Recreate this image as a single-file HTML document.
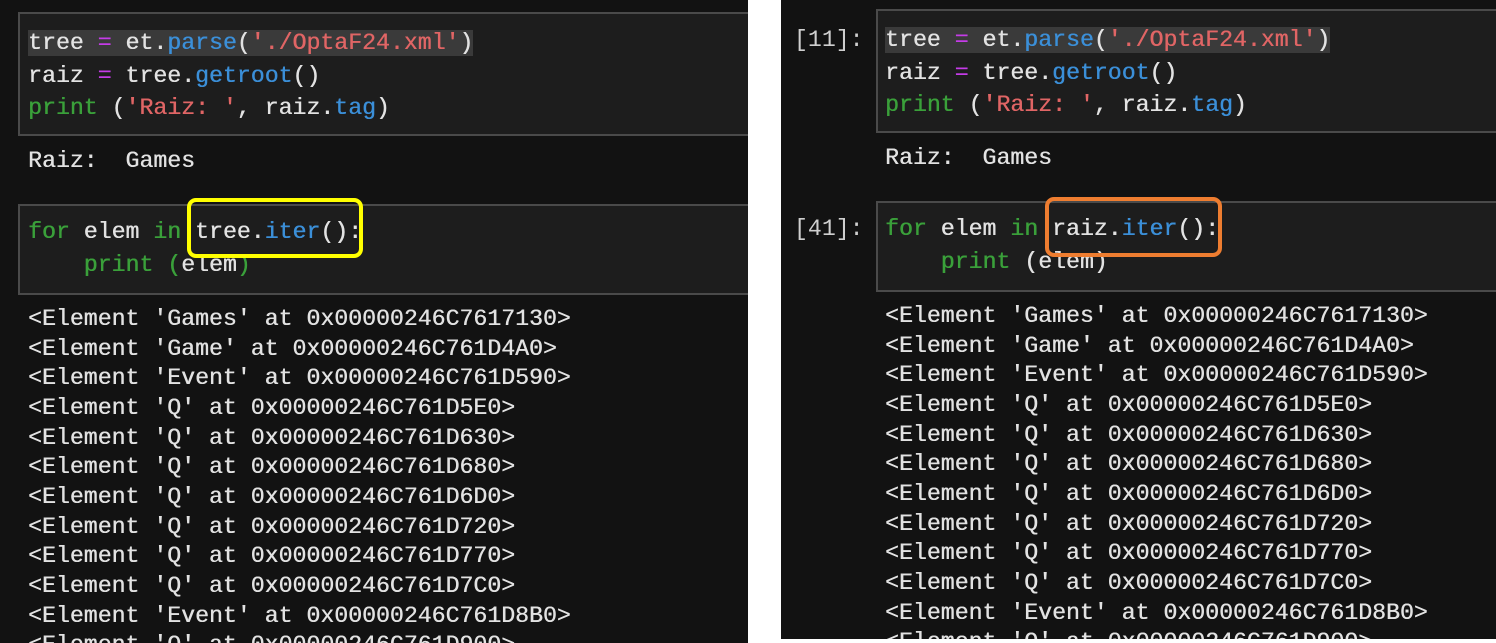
<!DOCTYPE html>
<html><head><meta charset="utf-8"><style>
body{margin:0;width:1496px;height:643px;background:#fff;overflow:hidden;position:relative;font-family:"Liberation Mono",monospace;font-size:23.2px;color:#e2e2e2}
.pan{position:absolute;background:#121212;overflow:hidden}
.box{position:absolute;background:#1d1d1d;border:2px solid #4a4a4a}
.t{position:absolute;white-space:pre;text-shadow:0.4px 0 0 currentColor}
.c{line-height:32.5px}
.o{line-height:29.65px}
.g{color:#3aa03a}.b{color:#3b8fd8}.r{color:#e06565}.p{color:#c53ce8}
.hl{background:#3a3a3a}
.pr{position:absolute;color:#cfcfcf;white-space:pre}
.ring{position:absolute;border-radius:9px;border:4px solid}
</style></head><body>
<div class="pan" style="left:0;top:0;width:748px;height:643px">
  <div class="box" style="left:18px;top:12px;width:760px;height:120px"></div>
  <div class="pr" style="left:-10px;top:27px;line-height:32.5px">:</div>
  <div class="t c" style="left:28px;top:27px"><span class="hl">tree <span class="p">=</span> et.<span class="b">parse</span>(<span class="r">'./OptaF24.xml'</span>)</span>
raiz <span class="p">=</span> tree.<span class="b">getroot</span>()
<span class="g">print</span> (<span class="r">'Raiz: '</span>, raiz.<span class="b">tag</span>)</div>
  <div class="t" style="left:28px;top:147px;line-height:29px">Raiz:  Games</div>
  <div class="box" style="left:18px;top:204px;width:760px;height:87px"></div>
  <div class="pr" style="left:-10px;top:216px;line-height:32.5px">:</div>
  <div class="t c" style="left:28px;top:216px"><span class="g">for</span> elem <span class="g">in</span> tree.<span class="b">iter</span>():
    <span class="g">print</span> <span class="g">(</span>elem<span class="g">)</span></div>
  <div class="ring" style="left:187px;top:198px;width:168px;height:52px;border-color:#ffff00"></div>
  <div class="t o" style="left:28px;top:305px">&lt;Element 'Games' at 0x00000246C7617130&gt;
&lt;Element 'Game' at 0x00000246C761D4A0&gt;
&lt;Element 'Event' at 0x00000246C761D590&gt;
&lt;Element 'Q' at 0x00000246C761D5E0&gt;
&lt;Element 'Q' at 0x00000246C761D630&gt;
&lt;Element 'Q' at 0x00000246C761D680&gt;
&lt;Element 'Q' at 0x00000246C761D6D0&gt;
&lt;Element 'Q' at 0x00000246C761D720&gt;
&lt;Element 'Q' at 0x00000246C761D770&gt;
&lt;Element 'Q' at 0x00000246C761D7C0&gt;
&lt;Element 'Event' at 0x00000246C761D8B0&gt;
&lt;Element 'Q' at 0x00000246C761D900&gt;</div>
</div>
<div class="pan" style="left:781px;top:0;width:715px;height:639px">
  <div class="box" style="left:95px;top:9px;width:700px;height:120px"></div>
  <div class="pr" style="left:13px;top:24px;line-height:32.5px">[11]:</div>
  <div class="t c" style="left:104px;top:24px"><span class="hl">tree <span class="p">=</span> et.<span class="b">parse</span>(<span class="r">'./OptaF24.xml'</span>)</span>
raiz <span class="p">=</span> tree.<span class="b">getroot</span>()
<span class="g">print</span> (<span class="r">'Raiz: '</span>, raiz.<span class="b">tag</span>)</div>
  <div class="t" style="left:104px;top:144px;line-height:29px">Raiz:  Games</div>
  <div class="box" style="left:95px;top:201px;width:700px;height:87px"></div>
  <div class="pr" style="left:13px;top:213px;line-height:32.5px">[41]:</div>
  <div class="t c" style="left:104px;top:213px"><span class="g">for</span> elem <span class="g">in</span> raiz.<span class="b">iter</span>():
    <span class="g">print</span> (elem)</div>
  <div class="ring" style="left:264px;top:197px;width:169px;height:52px;border-color:#ee7d30"></div>
  <div class="t o" style="left:104px;top:302px">&lt;Element 'Games' at 0x00000246C7617130&gt;
&lt;Element 'Game' at 0x00000246C761D4A0&gt;
&lt;Element 'Event' at 0x00000246C761D590&gt;
&lt;Element 'Q' at 0x00000246C761D5E0&gt;
&lt;Element 'Q' at 0x00000246C761D630&gt;
&lt;Element 'Q' at 0x00000246C761D680&gt;
&lt;Element 'Q' at 0x00000246C761D6D0&gt;
&lt;Element 'Q' at 0x00000246C761D720&gt;
&lt;Element 'Q' at 0x00000246C761D770&gt;
&lt;Element 'Q' at 0x00000246C761D7C0&gt;
&lt;Element 'Event' at 0x00000246C761D8B0&gt;
&lt;Element 'Q' at 0x00000246C761D900&gt;</div>
</div>
</body></html>
